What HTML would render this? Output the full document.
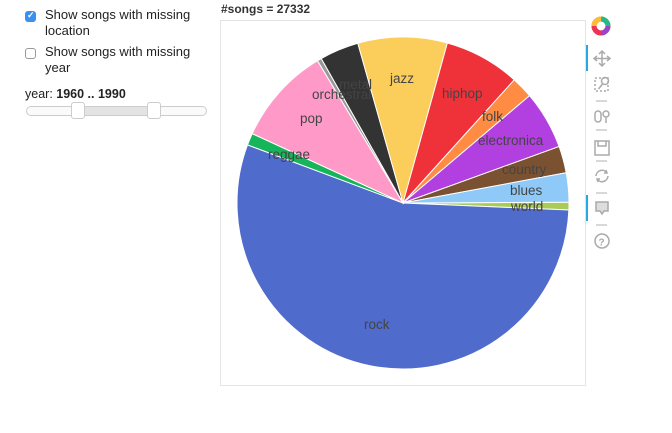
<!DOCTYPE html>
<html><head><meta charset="utf-8"><style>
body{margin:0;width:672px;height:433px;background:#fff;font-family:"Liberation Sans",sans-serif;position:relative;overflow:hidden}
.a{position:absolute}
.cb{position:absolute;width:11px;height:11px;border-radius:3px;box-sizing:border-box}
.lbl{position:absolute;font-size:13px;color:#222;line-height:16px}
.pl{font-size:13.5px;fill:#444}
</style></head><body>
<div class="cb" style="left:25px;top:11px;background:#3b8ff0;"></div>
<div class="a" style="left:27px;top:10px;color:#fff;font-size:9px;font-weight:bold">✓</div>
<div class="lbl" style="left:45px;top:7px">Show songs with missing<br>location</div>
<div class="cb" style="left:25px;top:48px;border:1px solid #999;background:#fff"></div>
<div class="lbl" style="left:45px;top:44px">Show songs with missing<br>year</div>
<div class="lbl" style="left:25px;top:86px;font-size:12.5px">year: <b>1960 .. 1990</b></div>
<div class="a" style="left:26px;top:106px;width:179px;height:8px;border:1px solid #ccc;border-radius:5px;background:#fafafa"></div>
<div class="a" style="left:78px;top:107px;width:75px;height:8px;background:#e3e3e3"></div>
<div class="a" style="left:71px;top:102px;width:12px;height:15px;border:1px solid #ccc;border-radius:3px;background:#fff"></div>
<div class="a" style="left:147px;top:102px;width:12px;height:15px;border:1px solid #ccc;border-radius:3px;background:#fff"></div>
<div class="a" style="left:221px;top:2px;font-size:12px;font-weight:bold;color:#333">#songs = 27332</div>
<div class="a" style="left:220px;top:20px;width:364px;height:364px;border:1px solid #e4e4e4"></div>
<svg class="a" style="left:0;top:0" width="672" height="433" id="s">
<g id="pie"></g>
<text class="pl" x="390" y="83">jazz</text>
<text class="pl" x="442" y="98">hiphop</text>
<text class="pl" x="482" y="121">folk</text>
<text class="pl" x="478" y="145">electronica</text>
<text class="pl" x="502" y="174">country</text>
<text class="pl" x="510" y="195">blues</text>
<text class="pl" x="511" y="211">world</text>
<text class="pl" x="339" y="89">metal</text>
<text class="pl" x="312" y="99">orchestral</text>
<text class="pl" x="300" y="123">pop</text>
<text class="pl" x="268" y="159">reggae</text>
<text class="pl" x="364" y="329">rock</text>
<g transform="translate(601,26)">
<circle r="7" fill="none" stroke="#e84" stroke-width="5"/>
<path d="M0,-7 A7,7 0 0 1 7,0" stroke="#2b8" stroke-width="5" fill="none"/>
<path d="M7,0 A7,7 0 0 1 0,7" stroke="#94c" stroke-width="5" fill="none"/>
<path d="M0,7 A7,7 0 0 1 -7,0" stroke="#e35" stroke-width="5" fill="none"/>
<path d="M-7,0 A7,7 0 0 1 0,-7" stroke="#fb3" stroke-width="5" fill="none"/>
</g>
<rect x="586" y="45" width="2" height="26" fill="#26a9e0"/>
<rect x="586" y="195" width="2" height="26" fill="#26a9e0"/>
<g stroke="#aaa" fill="none" stroke-width="1.5">
<path d="M602,51v15M594.5,58.5h15M599,54l3,-3l3,3M599,63l3,3l3,-3M597,56l-3,2.5l3,2.5M607,56l3,2.5l-3,2.5"/>
<rect x="595" y="78" width="13" height="13" stroke-dasharray="2,2"/>
<circle cx="605" cy="81" r="3.5"/><path d="M602.5,84l-4,5"/>
<path d="M596,101h11M596,130h11M596,161h11M596,193h11M596,225h11" stroke="#ccc"/>
<rect x="595" y="111" width="6" height="11" rx="3"/><circle cx="606" cy="114" r="3"/><path d="M606,117v6"/>
<rect x="595" y="141" width="14" height="14"/><path d="M598,141v5h8v-5"/>
<path d="M596,176a6,6 0 0 1 11,-3M608,176a6,6 0 0 1 -11,3M606,170l1,3l-3,0M598,182l-1,-3l3,0"/>
<path d="M596,202h12v9h-4l-2,3l-2,-3h-4z" fill="#ddd"/>
<circle cx="602" cy="241" r="7"/>
</g>
<text x="598.5" y="245.5" font-size="10" fill="#aaa" font-weight="bold">?</text>
</svg>
<script>
var cx=403,cy=203,r=166;
var sl=[["#a8cc55",-0.3,2.4],["#4f6bcb",2.4,200.5],["#17b55a",200.5,204.7],["#ff9ac8",204.7,239],["#999",239,240.5],["#333",240.5,254.2],["#fbcd5a",254.2,285.5],["#ef313a",285.5,312.1],["#ff8c42",312.1,319.7],["#b23fe0",319.7,340.1],["#7b5231",340.1,349.5],["#8ec9f8",349.5,359.7]];
var h="";sl.forEach(function(s){var a=s[1]*Math.PI/180,b=s[2]*Math.PI/180;
var x1=cx+r*Math.cos(a),y1=cy+r*Math.sin(a),x2=cx+r*Math.cos(b),y2=cy+r*Math.sin(b);
var lg=(s[2]-s[1])>180?1:0;
h+='<path d="M'+cx+','+cy+'L'+x1+','+y1+'A'+r+','+r+' 0 '+lg+' 1 '+x2+','+y2+'Z" fill="'+s[0]+'" stroke="#fff" stroke-width="1"/>';});
document.getElementById("pie").innerHTML=h;
</script>
</body></html>
